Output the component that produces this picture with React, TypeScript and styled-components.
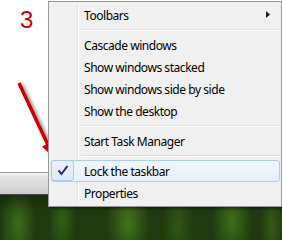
import React from "react";
import styled, { createGlobalStyle } from "styled-components";

const Global = createGlobalStyle`
  html, body { margin: 0; padding: 0; background: #ffffff; }
  body { font-family: "Noto Sans", "Liberation Sans", sans-serif; }
`;

const Desktop = styled.div`
  position: relative;
  width: 282px;
  height: 240px;
  overflow: hidden;
  display: flex;
  flex-direction: column;
`;

const Window = styled.div`
  height: 172px;
  background: #ffffff;
`;

const Taskbar = styled.div`
  height: 21px;
  border-top: 1px solid #9a9a9a;
  border-bottom: 1px solid #4a4a4a;
  background: linear-gradient(#f6f6f6 0%, #e4e4e4 20%, #d6d7d9 70%, #c9cacc 100%);
`;

const Wallpaper = styled.div`
  flex: 1;
  background:
    linear-gradient(rgba(0, 0, 0, 0.25), rgba(0, 0, 0, 0) 35%),
    radial-gradient(ellipse 18px 40px at 18px 30px, rgba(70, 120, 30, 0.8), rgba(70, 120, 30, 0)),
    radial-gradient(ellipse 14px 40px at 62px 25px, rgba(60, 110, 25, 0.7), rgba(60, 110, 25, 0)),
    radial-gradient(ellipse 22px 40px at 128px 28px, rgba(75, 130, 30, 0.8), rgba(75, 130, 30, 0)),
    radial-gradient(ellipse 16px 40px at 178px 30px, rgba(55, 100, 22, 0.7), rgba(55, 100, 22, 0)),
    radial-gradient(ellipse 20px 40px at 232px 26px, rgba(70, 125, 28, 0.8), rgba(70, 125, 28, 0)),
    radial-gradient(ellipse 12px 40px at 272px 30px, rgba(60, 105, 25, 0.7), rgba(60, 105, 25, 0)),
    #1f3a10;
`;

const StepNumber = styled.div`
  position: absolute;
  left: 20px;
  top: 6px;
  font-family: "Liberation Sans", Arial, sans-serif;
  font-size: 24px;
  line-height: 28px;
  color: #cc0000;
`;

const Pointer = styled.svg`
  position: absolute;
  left: 0;
  top: 0;
  overflow: visible;
`;

const Menu = styled.div`
  position: absolute;
  left: 48px;
  top: 1px;
  width: 229px;
  padding: 2px 1px 2px 2px;
  background: #f0f0f0;
  border: 1px solid #979797;
  box-shadow: 2px 2px 2px rgba(0, 0, 0, 0.35);
  display: flex;
  flex-direction: column;
`;

const Gutter = styled.div`
  position: absolute;
  left: 28px;
  top: 2px;
  bottom: 2px;
  width: 1px;
  background: #e2e3e3;
  border-right: 1px solid #ffffff;
`;

const Item = styled.div<{ $active?: boolean }>`
  position: relative;
  height: 22px;
  display: flex;
  align-items: center;
  box-sizing: border-box;
  padding-left: 32px;
  font-size: 12px;
  color: #000000;
  border: 1px solid ${(p) => (p.$active ? "#aeccf1" : "transparent")};
  border-radius: 3px;
  background: ${(p) =>
    p.$active ? "linear-gradient(#f2f7fd, #e6eefa)" : "transparent"};
`;

const Label = styled.span`
  letter-spacing: -0.45px;
`;

const Separator = styled.div`
  height: 8px;
  display: flex;
  align-items: center;
  padding-left: 30px;
  &::after {
    content: "";
    flex: 1;
    height: 1px;
    background: #e0e0e0;
    border-bottom: 1px solid #ffffff;
  }
`;

const CheckBox = styled.div`
  position: absolute;
  left: -1px;
  top: -1px;
  width: 23px;
  height: 21px;
  box-sizing: border-box;
  border: 1px solid #a8c8f0;
  border-radius: 3px;
  background: linear-gradient(#eef4fd, #dde8f8);
  display: flex;
  align-items: center;
  justify-content: center;
`;

const SubArrow = styled.svg`
  position: absolute;
  right: 8px;
  top: 6px;
`;

export default function App() {
  return (
    <>
      <Global />
      <Desktop>
        <Window />
        <Taskbar />
        <Wallpaper />
        <StepNumber>3</StepNumber>
        <Pointer width="282" height="240" viewBox="0 0 282 240">
          <defs>
            <filter id="sh" x="-50%" y="-50%" width="200%" height="200%">
              <feDropShadow dx="3" dy="2" stdDeviation="1.5" floodColor="#000" floodOpacity="0.4" />
            </filter>
          </defs>
          <g filter="url(#sh)">
            <line x1="19" y1="83" x2="48" y2="145" stroke="#cc0000" strokeWidth="3.5" />
            <polygon points="54.5,158 54,141 42,146.5" fill="#cc0000" />
          </g>
        </Pointer>
        <Menu>
          <Gutter />
          <Item>
            <Label>Toolbars</Label>
            <SubArrow width="5" height="8" viewBox="0 0 5 8">
              <polygon points="0,0 4,3.5 0,7" fill="#1a1a1a" />
            </SubArrow>
          </Item>
          <Separator />
          <Item><Label>Cascade windows</Label></Item>
          <Item><Label>Show windows stacked</Label></Item>
          <Item><Label>Show windows side by side</Label></Item>
          <Item><Label>Show the desktop</Label></Item>
          <Separator />
          <Item><Label>Start Task Manager</Label></Item>
          <Separator />
          <Item $active>
            <CheckBox>
              <svg width="12" height="11" viewBox="0 0 12 11">
                <path d="M1.5 5.5 L4.5 9 L10.5 1" fill="none" stroke="#1a2a8f" strokeWidth="2" />
              </svg>
            </CheckBox>
            <Label>Lock the taskbar</Label>
          </Item>
          <Item><Label>Properties</Label></Item>
        </Menu>
      </Desktop>
    </>
  );
}
